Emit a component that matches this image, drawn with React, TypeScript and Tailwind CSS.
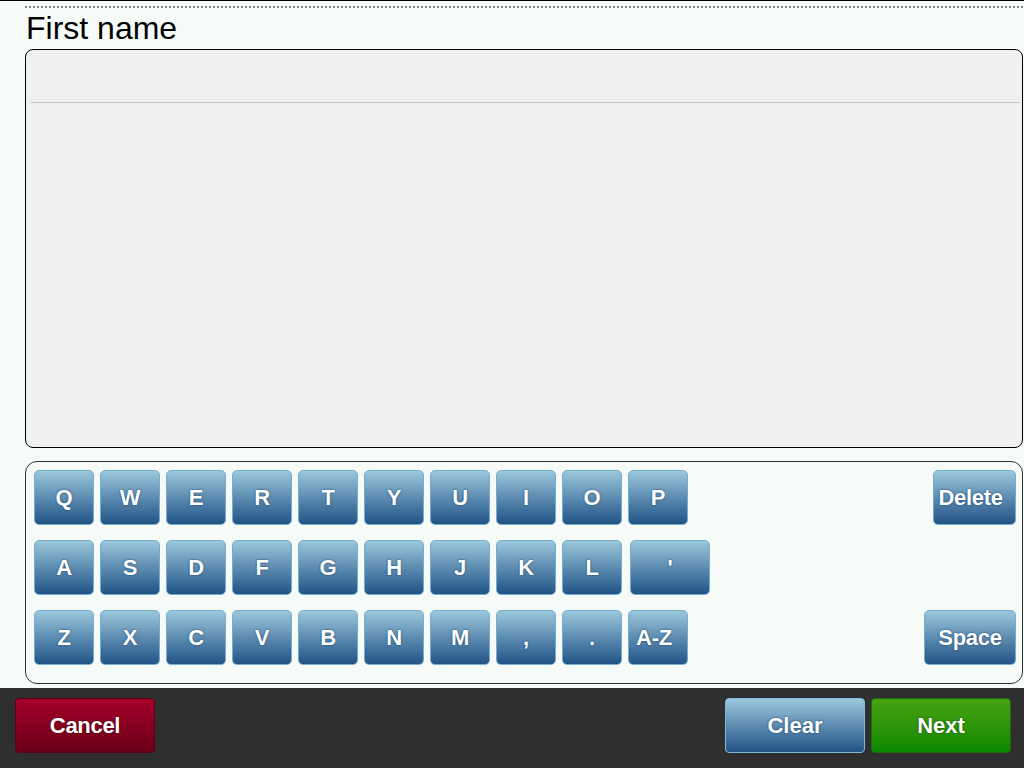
import React from "react";

const font = { fontFamily: '"Liberation Sans", Arial, sans-serif' };

function Key({ label, w = 60, ml = 0, pr = 0 }: { label: string; w?: number; ml?: number; pr?: number }) {
  return (
    <div
      className="h-[55px] shrink-0 rounded-[5px] border border-[#74add0] bg-gradient-to-b from-[#9cc8dc] to-[#215386] flex items-center justify-center text-white font-bold text-[22px] tracking-[-0.3px] [text-shadow:0_0_2px_#0b3560]"
      style={{ width: w, marginLeft: ml, paddingRight: pr }}
    >
      {label}
    </div>
  );
}

export default function App() {
  const row1 = ["Q", "W", "E", "R", "T", "Y", "U", "I", "O", "P"];
  const row2 = ["A", "S", "D", "F", "G", "H", "J", "K", "L"];
  const row3 = ["Z", "X", "C", "V", "B", "N", "M", ",", "."];
  return (
    <div className="w-[1024px] h-[768px] overflow-hidden bg-[#f6fbf8] flex flex-col border-t border-black" style={font}>
      <div className="mt-[5px] ml-[25px] h-[2px] bg-[repeating-linear-gradient(90deg,#8a8a8a_0_2px,transparent_2px_4px)]" />
      <div className="ml-[26px] mt-[2px] h-[36px] text-[32px] leading-[36px] text-black">First name</div>
      <div className="ml-[25px] mr-[1px] mt-[3px] h-[399px] rounded-[8px] border border-black bg-[#f0f0f0] pl-[5px] pr-[2px] shrink-0">
        <div className="h-[53px] border-b border-[#c4c4c4]" />
      </div>
      <div className="ml-[25px] mr-[1px] mt-[13px] h-[223px] shrink-0 rounded-[12px] border border-[#333] pl-[8px] pr-[6px] pt-[8px] flex flex-col gap-[15px]">
        <div className="flex gap-[6px]">
          {row1.map((k) => (
            <Key key={k} label={k} />
          ))}
          <div className="flex-1" />
          <Key label="Delete" w={83} pr={8} />
        </div>
        <div className="flex gap-[6px]">
          {row2.map((k) => (
            <Key key={k} label={k} />
          ))}
          <Key label="'" w={80} ml={2} />
        </div>
        <div className="flex gap-[6px]">
          {row3.map((k) => (
            <Key key={k} label={k} />
          ))}
          <Key label="A-Z" pr={8} />
          <div className="flex-1" />
          <Key label="Space" w={92} />
        </div>
      </div>
      <div className="mt-[4px] flex-1 bg-[#2f2f2f] flex items-start pt-[10px] pl-[15px] pr-[13px]">
        <div className="w-[140px] h-[55px] rounded-[4px] border border-[#5c0014] bg-gradient-to-b from-[#a6002a] to-[#6b0016] flex items-center justify-center text-white font-bold text-[22px] tracking-[-0.3px] [text-shadow:0_0_2px_#3a0008]">
          Cancel
        </div>
        <div className="flex-1" />
        <div className="w-[140px] h-[55px] rounded-[4px] border border-[#7bbcdc] bg-gradient-to-b from-[#9cc8dc] to-[#215386] flex items-center justify-center text-white font-bold text-[22px] [text-shadow:0_0_2px_#0b3560]">
          Clear
        </div>
        <div className="ml-[6px] w-[140px] h-[55px] rounded-[4px] border border-[#1f6a0a] bg-gradient-to-b from-[#46a212] to-[#058800] flex items-center justify-center text-white font-bold text-[22px] [text-shadow:0_0_2px_#0a3d00]">
          Next
        </div>
      </div>
    </div>
  );
}
